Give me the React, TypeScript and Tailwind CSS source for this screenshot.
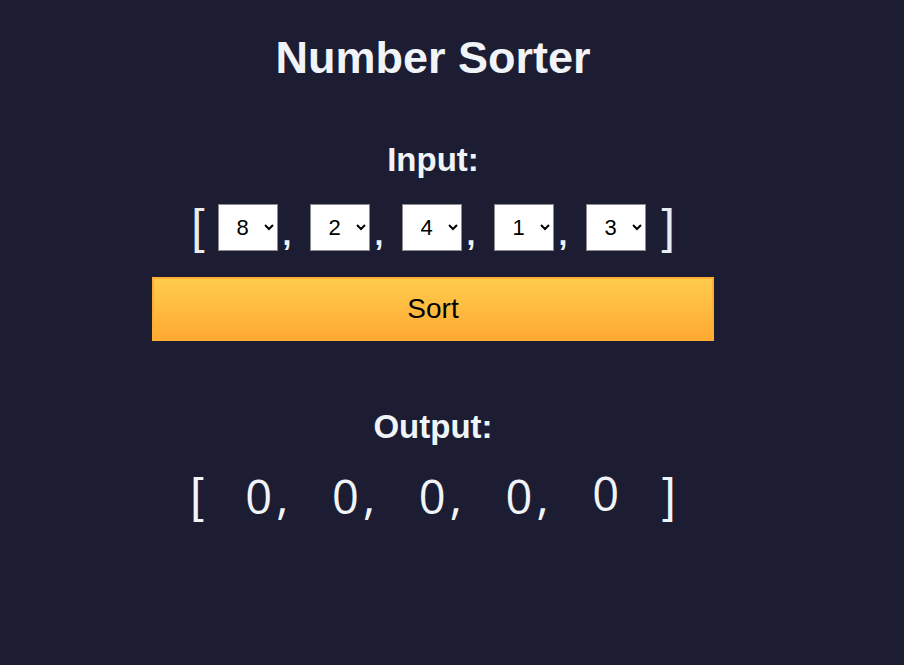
import { useState } from 'react';

const start = [8, 2, 4, 1, 3];

export default function App() {
    const [values, setValues] = useState<number[]>(start);
    const [sorted, setSorted] = useState<number[]>([0, 0, 0, 0, 0]);

    return (
        <div className="min-h-[665px] w-full bg-[#1c1d33] text-[#f0f4f8] font-['Liberation_Sans',Arial,sans-serif]">
            <div className="ml-[152px] flex w-[562px] flex-col items-center pt-[29px]">
                <h1 className="text-[45px] font-bold leading-[58px]">Number Sorter</h1>

                <h2 className="mt-[53px] text-[33px] font-bold leading-[40px]">Input:</h2>

                <div className="mt-[21px] flex items-center">
                    <span className="text-[48px] leading-[52px] text-[#e8ecf0]">[</span>
                    {values.map((v, i) => (
                        <div key={i} className="flex items-center">
                            <select
                                value={v}
                                onChange={e => {
                                    const next = [...values];
                                    next[i] = Number(e.target.value);
                                    setValues(next);
                                }}
                                className={`h-[47px] w-[60px] border border-[#8a8a8a] bg-white pl-[14px] text-[22px] text-black ${i === 0 ? 'ml-[13px]' : ''}`}
                            >
                                {[0, 1, 2, 3, 4, 5, 6, 7, 8, 9].map(n => (
                                    <option key={n} value={n}>{n}</option>
                                ))}
                            </select>
                            {i < values.length - 1 ? (
                                <span className="mt-[14px] w-[32px] pl-[5px] text-[32px] font-bold leading-none">,</span>
                            ) : (
                                <span className="w-[16px]" />
                            )}
                        </div>
                    ))}
                    <span className="text-[48px] leading-[52px] text-[#e8ecf0]">]</span>
                </div>

                <button
                    onClick={() => setSorted([...values].sort((a, b) => a - b))}
                    className="mt-[24px] h-[64px] w-full border-2 border-[#ffad33] bg-gradient-to-b from-[#ffcc4d] to-[#ffa931] text-[28px] text-black"
                >
                    Sort
                </button>

                <h2 className="mt-[66px] text-[33px] font-bold leading-[40px]">Output:</h2>

                <div className="mt-[18px] flex items-end font-['Open_Sans',sans-serif] text-[47px] leading-[56px] text-[#f0f4f8]">
                    <span className="w-[55px] font-['Liberation_Sans',sans-serif] text-[48px]">[</span>
                    {sorted.map((n, i) => (
                        <span key={i} className={i < sorted.length - 1 ? 'w-[86.75px]' : 'mb-[3px] w-[70px]'}>
                            {n}
                            {i < sorted.length - 1 && <span className="ml-[4px]">,</span>}
                        </span>
                    ))}
                    <span className="font-['Liberation_Sans',sans-serif] text-[48px]">]</span>
                </div>
            </div>
        </div>
    );
}
